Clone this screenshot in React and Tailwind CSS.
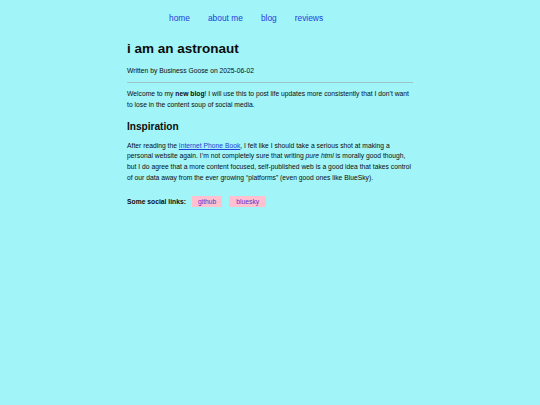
export default function App() {
  return (
    <div className="min-h-[405px] bg-[#a1f4f8] font-['Liberation_Sans',Arial,sans-serif] text-[#0d0d0d]">
      <nav className="flex gap-[18px] pt-[12px] pl-[169px] text-[8.4px] leading-[12px]">
        <a href="#" className="text-[#1f3fdc]">home</a>
        <a href="#" className="text-[#1f3fdc]">about me</a>
        <a href="#" className="text-[#1f3fdc]">blog</a>
        <a href="#" className="text-[#1f3fdc]">reviews</a>
      </nav>

      <main className="mx-auto w-[286px]">
        <h1 className="mt-[16px] text-[13.5px] font-bold leading-[17px]">i am an astronaut</h1>
        <p className="mt-[9px] text-[6.75px] leading-[10px]">
          Written by Business Goose on 2025-06-02
        </p>
        <hr className="mt-[6px] border-t border-[#9cc6c9]" />

        <p className="mt-[6px] text-[6.75px] leading-[10.8px]">
          Welcome to my <strong>new blog</strong>! I will use this to post life updates more consistently that I don’t want to lose in the content soup of social media.
        </p>

        <h2 className="mt-[9px] text-[10.1px] font-bold leading-[13px]">Inspiration</h2>

        <p className="mt-[8px] text-[6.75px] leading-[10.8px]">
          After reading the <a href="#" className="text-[#1f3fdc] underline">Internet Phone Book</a>, I felt like I should take a serious shot at making a personal website again. I’m not completely sure that writing <em>pure html</em> is morally good though, but I do agree that a more content focused, self-published web is a good idea that takes control of our data away from the ever growing “platforms” (even good ones like BlueSky).
        </p>

        <div className="mt-[12px] flex items-center text-[6.75px] leading-[11px]">
          <strong className="mr-[6px]">Some social links:</strong>
          <a href="#" className="bg-[#ffc1cf] px-[6px] text-[#5a2fd0]">github</a>
          <a href="#" className="ml-[7px] bg-[#ffc1cf] px-[7px] text-[#5a2fd0]">bluesky</a>
        </div>
      </main>
    </div>
  );
}
